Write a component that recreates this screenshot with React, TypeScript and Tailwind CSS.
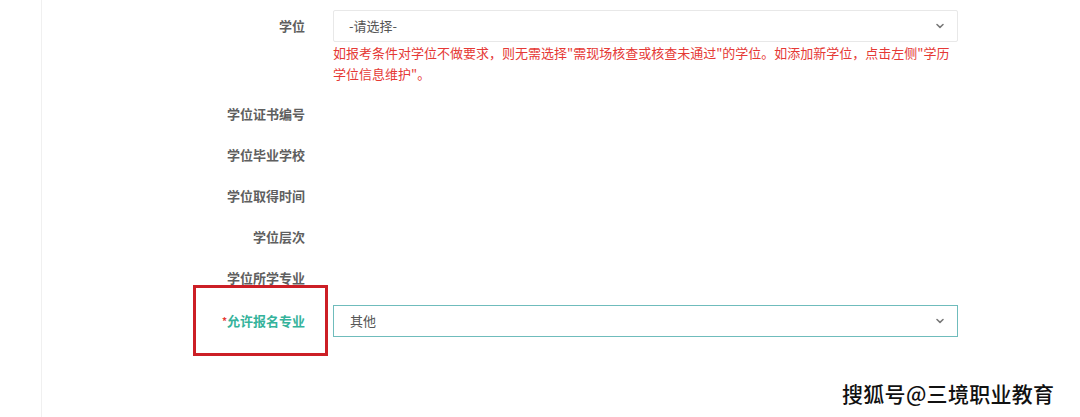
import React from "react";

const Chevron = () => (
  <svg width="8" height="6" viewBox="0 0 8 6" className="shrink-0">
    <path d="M1 1.5 L4 4.4 L7 1.5" fill="none" stroke="#777" strokeWidth="1.5" strokeLinecap="round" strokeLinejoin="round" />
  </svg>
);

const Label = ({ text }: { text: string }) => (
  <div className="w-[263px] shrink-0 text-right text-[13px] font-bold text-[#5f5f5f] leading-[32px]">{text}</div>
);

const Row = ({ text, className = "" }: { text: string; className?: string }) => (
  <div className={"flex h-[32px] items-center " + className}>
    <Label text={text} />
  </div>
);

export default function App() {
  return (
    <div
      className="relative w-[1080px] h-[417px] overflow-hidden bg-white flex"
      style={{ fontFamily: '"Noto Sans CJK SC", "Noto Sans", sans-serif' }}
    >
      <div className="w-[42px] shrink-0 border-r border-[#f0f0f0]" />
      <div className="flex flex-col pt-[10px]">
        <div className="flex items-start">
          <Label text="学位" />
          <div className="ml-[28px] w-[625px]">
            <div className="h-[32px] border border-[#e8e8e8] rounded-[2px] flex items-center justify-between pl-[15px] pr-[13px] text-[13px] text-[#555]">
              <span>-请选择-</span>
              <Chevron />
            </div>
            <div className="text-[13px] leading-[21px] text-[#e53935]">
              <div className="whitespace-nowrap">如报考条件对学位不做要求，则无需选择"需现场核查或核查未通过"的学位。如添加新学位，点击左侧"学历</div>
              <div className="whitespace-nowrap">学位信息维护"。</div>
            </div>
          </div>
        </div>
        <Row text="学位证书编号" className="mt-[14px]" />
        <Row text="学位毕业学校" className="mt-[9px]" />
        <Row text="学位取得时间" className="mt-[9px]" />
        <Row text="学位层次" className="mt-[9px]" />
        <Row text="学位所学专业" className="mt-[9px]" />
        <div className="flex h-[32px] items-center mt-[11px]">
          <div className="w-[263px] shrink-0 text-right text-[13px] font-bold text-[#35b39b] leading-[32px]">
            <span className="text-[#e53935] text-[10px] align-top">*</span>允许报名专业
          </div>
          <div className="ml-[28px] w-[625px] h-[32px] border border-[#6fbcbc] flex items-center justify-between pl-[16px] pr-[13px] text-[13px] text-[#555]">
            <span>其他</span>
            <Chevron />
          </div>
        </div>
      </div>

      <div className="absolute left-[193px] top-[285px] w-[135px] h-[71px] border-[3px] border-[#cc1f26]" />

      <div
        className="absolute left-[842px] top-[379px] text-[21px] leading-[28px] font-medium text-[#111] tracking-[0.3px] [text-shadow:1px_1px_0_#fff,-1px_-1px_0_#fff,1px_-1px_0_#fff,-1px_1px_0_#fff]"
      >
        搜狐号@三境职业教育
      </div>
    </div>
  );
}
